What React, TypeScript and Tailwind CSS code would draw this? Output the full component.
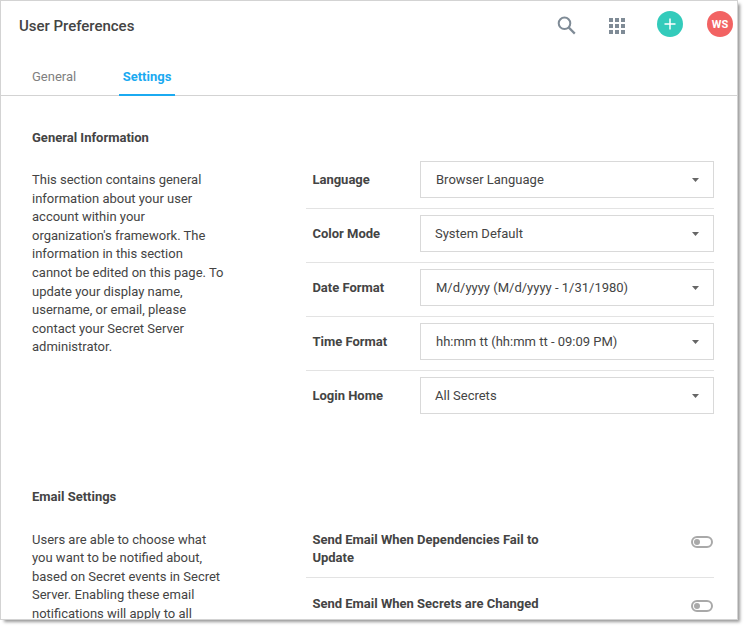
import React from "react";

const preferences = [
  { label: "Language", value: "Browser Language", inset: "pl-[15px]" },
  { label: "Color Mode", value: "System Default", inset: "pl-[14px]" },
  { label: "Date Format", value: "M/d/yyyy (M/d/yyyy - 1/31/1980)", inset: "pl-[15px]" },
  { label: "Time Format", value: "hh:mm tt (hh:mm tt - 09:09 PM)", inset: "pl-[15px]" },
  { label: "Login Home", value: "All Secrets", inset: "pl-[14px]" },
];

function Toggle() {
  return (
    <button className="mt-[5px] mr-[1px] flex h-3 w-[22px] shrink-0 items-center rounded-full border-2 border-[#a9a9a9] pl-[1px]">
      <span className="size-[6px] rounded-full bg-[#a9a9a9]" />
    </button>
  );
}

function Header() {
  return (
    <header className="flex h-[58px] shrink-0 justify-between pl-[18px]">
      <h1 className="mt-[15px] text-[15px] leading-5 font-medium tracking-[-0.02px]">User Preferences</h1>
      <div className="flex">
        <svg className="mt-[15px] mr-[33px] size-[19px]" viewBox="0 0 19 19" fill="none" stroke="#7f8b96" strokeWidth="2">
          <circle cx="7.5" cy="7.3" r="5.8" />
          <path d="M11.6 11.4 17.8 17.6" strokeWidth="2.2" />
        </svg>
        <div className="mt-[17px] mr-8 grid size-4 grid-cols-3 gap-[2px]">
          {Array.from({ length: 9 }, (_, i) => (
            <span key={i} className="size-1 bg-[#7f8b96]" />
          ))}
        </div>
        <button className="mt-[10px] mr-6 flex size-[26px] items-center justify-center rounded-full bg-[#33cbbb]">
          <svg className="size-3" viewBox="0 0 12 12" stroke="white" strokeWidth="1.5">
            <path d="M.5 6h11M6 .5v11" />
          </svg>
        </button>
        <button className="mt-[10px] mr-1 flex size-[26px] items-center justify-center rounded-full bg-[#f26363] pt-[2px] text-[11px] font-bold text-white">
          WS
        </button>
      </div>
    </header>
  );
}

export default function App() {
  return (
    <div className="h-[628px] w-[746px] overflow-hidden bg-white font-['Roboto','Liberation_Sans',sans-serif] text-[13px] leading-[18.57px] text-[#444]">
      <div className="flex h-[620px] w-[738px] flex-col border border-[#d3d3d3] shadow-[3px_3px_3px_-1px_#999]">
        <Header />
        <nav className="flex h-[37px] shrink-0 border-b border-[#d3d3d3] pl-[31px]">
          <a className="mt-[9px] w-[87px] text-[#808080]">General</a>
          <a className="-mb-px flex w-14 justify-center border-b-2 border-[#1baaf1] pt-[9px] font-bold text-[#1baaf1]">Settings</a>
        </nav>
        <main className="min-h-0 flex-1 overflow-hidden pr-[23px] pl-[31px]">
          <section className="h-[359px] pt-[33px]">
            <h2 className="h-[18px] font-bold">General Information</h2>
            <div className="mt-2 flex">
              <p className="mt-[16.2px] w-[193px] shrink-0">
                This section contains general information about your user account within your organization's framework. The information in this section cannot be edited on this page. To update your display name, username, or email, please contact your Secret Server administrator.
              </p>
              <div className="ml-[81px] flex-1">
                {preferences.map((p) => (
                  <div key={p.label} className="flex h-[54px] items-start border-b border-[#e3e3e3] pt-[6px] pl-[6px] last:border-b-0">
                    <span className="mt-[10px] w-[108px] pl-[0.4px] font-bold">{p.label}</span>
                    <button className={`flex h-[37px] w-[294px] items-center justify-between border border-[#d9d9d9] pt-px pr-[14px] ${p.inset}`}>
                      <span>{p.value}</span>
                      <svg className="h-1 w-[7px]" viewBox="0 0 7 4">
                        <path d="M0 0h7L3.5 4Z" fill="#666" />
                      </svg>
                    </button>
                  </div>
                ))}
              </div>
            </div>
          </section>
          <section className="pt-[33px]">
            <h2 className="h-[18px] font-bold">Email Settings</h2>
            <div className="mt-[25px] flex">
              <p className="-mt-[0.25px] w-[193px] shrink-0">
                Users are able to choose what you want to be notified about, based on Secret events in Secret Server. Enabling these email notifications will apply to all
              </p>
              <div className="ml-[81px] flex-1 font-bold">
                <div className="flex h-[47px] justify-between border-b border-[#e3e3e3] pl-[6px]">
                  <span className="-mt-[0.25px] w-[240px] pl-[0.4px]">Send Email When Dependencies Fail to Update</span>
                  <Toggle />
                </div>
                <div className="mt-[17px] flex justify-between pl-[6px]">
                  <span className="pl-[0.4px]">Send Email When Secrets are Changed</span>
                  <Toggle />
                </div>
              </div>
            </div>
          </section>
        </main>
      </div>
    </div>
  );
}
